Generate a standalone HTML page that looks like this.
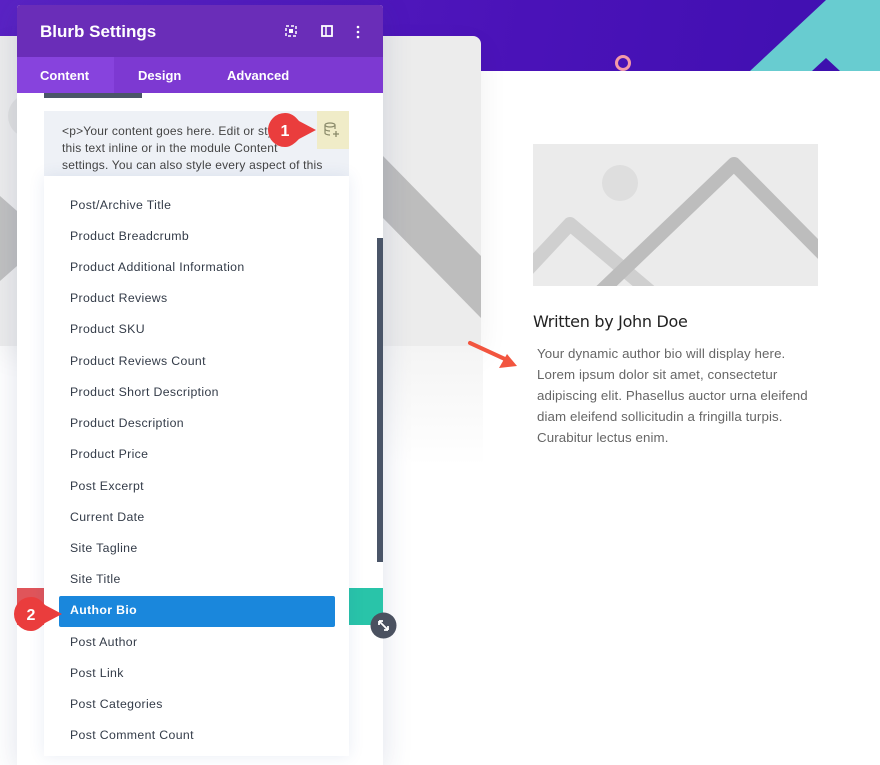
<!DOCTYPE html>
<html><head><meta charset="utf-8"><style>
*{margin:0;padding:0;box-sizing:border-box}
body{width:880px;height:751px;overflow:hidden;background:#fff;position:relative;font-family:"Liberation Sans",sans-serif}
.abs{position:absolute}
.item{position:absolute;left:70px;font-size:12.3px;color:#333b48;letter-spacing:0.35px}
</style></head><body>
<div class="abs" style="left:0;top:0;width:880px;height:71px;background:linear-gradient(100deg,#5a22c4,#4a12b8 60%,#3f0fb0)"></div>
<svg class="abs" style="left:0;top:0" width="880" height="751">
<polygon points="750,71 826,0 880,0 880,71" fill="#68ccd0"/>
<polygon points="812,71 826,58 840,71" fill="#3d10ae"/>
<circle cx="623" cy="63" r="6.5" fill="none" stroke="#f39aa8" stroke-width="3"/>
</svg>
<div class="abs" style="left:0;top:36px;width:481px;height:310px;background:#ececec;border-radius:0 8px 0 0;overflow:hidden;box-shadow:0 10px 30px rgba(0,0,0,.06)">
<svg width="481" height="310"><polygon points="383,120 481,220 481,282 383,182" fill="#bdbdbd"/><polygon points="0,160 17,175 17,230 0,245" fill="#c0c0c0"/><circle cx="30" cy="80" r="22" fill="#e0e0e0"/></svg>
</div>
<div class="abs" style="left:383px;top:346px;width:100px;height:120px;background:linear-gradient(#f4f4f4,#fff)"></div>
<svg class="abs" style="left:533px;top:144px" width="285" height="142">
<rect width="285" height="142" fill="#ebebeb"/>
<circle cx="87" cy="39" r="18" fill="#dedede"/>
<polyline points="-5,125 37,80 120,150" fill="none" stroke="#cfcfcf" stroke-width="14" stroke-linejoin="round"/>
<polyline points="60,155 201,20 290,110" fill="none" stroke="#bdbdbd" stroke-width="14" stroke-linejoin="round"/>
</svg>
<div class="abs" style="left:533px;top:312px;font-family:'DejaVu Sans',sans-serif;font-size:16px;color:#222;letter-spacing:-0.3px">Written by John Doe</div>
<div class="abs" style="left:537px;top:343px;width:280px;font-size:13.3px;line-height:21px;color:#666;letter-spacing:0.1px">Your dynamic author bio will display here. Lorem ipsum dolor sit amet, consectetur adipiscing elit. Phasellus auctor urna eleifend diam eleifend sollicitudin a fringilla turpis. Curabitur lectus enim.</div>
<svg class="abs" style="left:465px;top:338px" width="60" height="35"><line x1="5" y1="5" x2="42" y2="22" stroke="#f2553f" stroke-width="4" stroke-linecap="round"/><polygon points="52,28 34,30 42,16" fill="#f2553f"/></svg>
<div class="abs" style="left:17px;top:5px;width:366px;height:760px;background:#fff;box-shadow:0 5px 30px rgba(40,60,120,.15);border-radius:3px 3px 0 0;overflow:hidden">
<div style="height:52px;background:#6a2db8;color:#fff;font-size:17px;font-weight:bold;padding:17px 0 0 23px">Blurb Settings</div>
<div style="height:36px;background:#7d39d2;color:#fff;font-size:13px;font-weight:bold;position:relative">
<div class="abs" style="left:0;top:0;width:97px;height:36px;background:#8743dd"></div>
<span class="abs" style="left:23px;top:11px">Content</span><span class="abs" style="left:121px;top:11px">Design</span><span class="abs" style="left:210px;top:11px">Advanced</span></div>
<div class="abs" style="left:27px;top:88px;width:98px;height:5px;background:#4a5568"></div>
<div class="abs" style="left:27px;top:106px;width:305px;height:65px;background:#eef1f6"></div>
<div class="abs" style="left:45px;top:118px;width:285px;font-size:12px;line-height:17px;color:#444;letter-spacing:0.2px;white-space:nowrap">&lt;p&gt;Your content goes here. Edit or style<br>this text inline or in the module Content<br>settings. You can also style every aspect of this</div>
<div class="abs" style="left:300px;top:106px;width:32px;height:38px;background:#f0ecc8"></div>
<div class="abs" style="left:0;top:583px;width:27px;height:37px;background:#e0555a"></div>
<div class="abs" style="left:332px;top:583px;width:34px;height:37px;background:#29c4a9"></div>
<div class="abs" style="left:360px;top:233px;width:6px;height:324px;background:#4a5568"></div>
</div>
<svg class="abs" style="left:322px;top:121px" width="20" height="20"><ellipse cx="8" cy="4" rx="5" ry="2" fill="none" stroke="#8a8a6a" stroke-width="1.2"/><path d="M3 4v8c0 1 2 2 5 2M13 4v4M3 8c0 1 2 2 5 2" fill="none" stroke="#8a8a6a" stroke-width="1.2"/><path d="M14 10v6M11 13h6" stroke="#8a8a6a" stroke-width="1.3"/></svg>
<svg class="abs" style="left:280px;top:22px" width="90" height="20"><rect x="6" y="4" width="10" height="10" fill="none" stroke="#fff" stroke-width="1.5" stroke-dasharray="3 2"/><rect x="9" y="7" width="4" height="4" fill="#fff"/><rect x="42" y="4" width="10" height="10" fill="none" stroke="#fff" stroke-width="1.8"/><line x1="46" y1="4" x2="46" y2="14" stroke="#fff" stroke-width="1.5"/><circle cx="78" cy="5" r="1.3" fill="#fff"/><circle cx="78" cy="10" r="1.3" fill="#fff"/><circle cx="78" cy="15" r="1.3" fill="#fff"/></svg>
<div class="abs" style="left:44px;top:176px;width:305px;height:580px;background:#fff;box-shadow:0 0 15px rgba(40,80,160,.1)"></div>
<div class="abs" style="left:59px;top:596px;width:276px;height:31px;background:#1a87dc;border-radius:2px"></div>
<div class="item" style="top:198px">Post/Archive Title</div>
<div class="item" style="top:229px">Product Breadcrumb</div>
<div class="item" style="top:260px">Product Additional Information</div>
<div class="item" style="top:291px">Product Reviews</div>
<div class="item" style="top:322px">Product SKU</div>
<div class="item" style="top:354px">Product Reviews Count</div>
<div class="item" style="top:385px">Product Short Description</div>
<div class="item" style="top:416px">Product Description</div>
<div class="item" style="top:447px">Product Price</div>
<div class="item" style="top:479px">Post Excerpt</div>
<div class="item" style="top:510px">Current Date</div>
<div class="item" style="top:541px">Site Tagline</div>
<div class="item" style="top:572px">Site Title</div>
<div class="item" style="top:603px;color:#fff;font-weight:bold">Author Bio</div>
<div class="item" style="top:635px">Post Author</div>
<div class="item" style="top:666px">Post Link</div>
<div class="item" style="top:697px">Post Categories</div>
<div class="item" style="top:728px">Post Comment Count</div>
<svg class="abs" style="left:370px;top:612px" width="27" height="27"><circle cx="13.5" cy="13.5" r="13" fill="#4a5160"/><path d="M9 9l9 9M9 9v4M9 9h4M18 18v-4M18 18h-4" stroke="#fff" stroke-width="1.8" fill="none"/></svg>
<svg class="abs" style="left:262px;top:110px" width="60" height="40"><path d="M23 3a17 17 0 1 0 0 34c6 0 10-4 14-8l17-9-17-9c-4-5-8-8-14-8z" fill="#ea3d3d"/><text x="23" y="26" font-family="Liberation Sans" font-weight="bold" font-size="16" fill="#fff" text-anchor="middle">1</text></svg>
<svg class="abs" style="left:8px;top:594px" width="60" height="40"><path d="M23 3a17 17 0 1 0 0 34c6 0 10-4 14-8l17-9-17-9c-4-5-8-8-14-8z" fill="#ea3d3d"/><text x="23" y="26" font-family="Liberation Sans" font-weight="bold" font-size="16" fill="#fff" text-anchor="middle">2</text></svg>
</body></html>
